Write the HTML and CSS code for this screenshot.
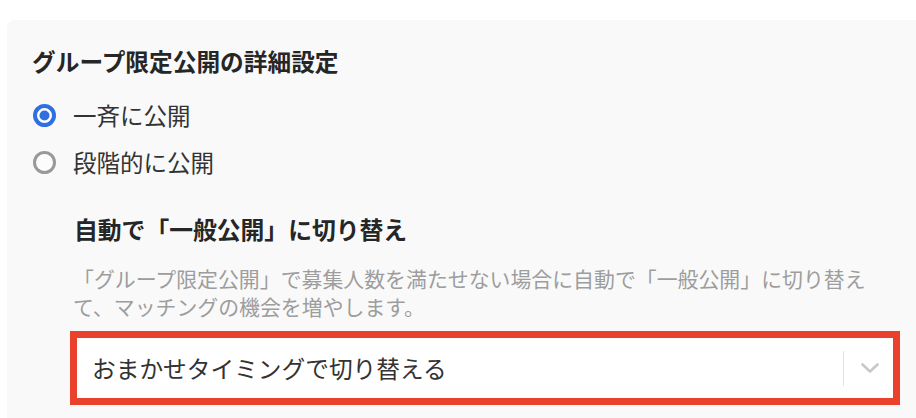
FILE: index.html
```html
<!DOCTYPE html>
<html lang="ja">
<head>
<meta charset="utf-8">
<link rel="stylesheet" href="styles.css">
</head>
<body>
<section class="card">
  <h2 class="title">グループ限定公開の詳細設定</h2>
  <div class="radios">
    <label class="radio-row">
      <svg class="radio" width="23" height="23" viewBox="0 0 23 23"><circle cx="11.5" cy="11.5" r="9.5" fill="#ffffff" stroke="#2f6fdf" stroke-width="4"/><circle cx="11.5" cy="11.5" r="5" fill="#2f6fdf"/></svg>
      <span class="radio-label">一斉に公開</span>
    </label>
    <label class="radio-row">
      <svg class="radio" width="23" height="23" viewBox="0 0 23 23"><circle cx="11.5" cy="11.5" r="10" fill="#fcfcfc" stroke="#999999" stroke-width="3"/></svg>
      <span class="radio-label">段階的に公開</span>
    </label>
  </div>
  <div class="sub">
    <h3 class="sub-title">自動で「一般公開」に切り替え</h3>
    <p class="desc">「グループ限定公開」で募集人数を満たせない場合に自動で「一般公開」に切り替え<br>て、マッチングの機会を増やします。</p>
    <div class="select">
      <span class="select-value">おまかせタイミングで切り替える</span>
      <span class="select-indicator">
        <svg width="18" height="10" viewBox="0 0 18 10"><path d="M1.5 1.5 L9 8.5 L16.5 1.5" fill="none" stroke="#c8c8c8" stroke-width="2.6" stroke-linecap="round" stroke-linejoin="round"/></svg>
      </span>
    </div>
  </div>
</section>
</body>
</html>
```
FILE: styles.css
```css
* { box-sizing: border-box; }
html, body { margin: 0; padding: 0; background: #ffffff; }
body {
  font-family: "Noto Sans CJK JP", "Noto Sans", sans-serif;
  color: #333333;
  width: 916px;
  height: 418px;
  overflow: hidden;
}
.card {
  margin: 20px 0 0 7px;
  background: #f9f9f9;
  border-radius: 8px 0 0 0;
  padding: 25px 0 20px 25px;
  min-height: 420px;
}
.title {
  margin: 0;
  font-size: 23.7px;
  line-height: 32px;
  font-weight: 700;
  color: #262626;
}
.radios {
  margin-top: 22px;
  display: flex;
  flex-direction: column;
  gap: 15px;
}
.radio-row {
  display: flex;
  align-items: center;
  height: 32px;
}
.radio {
  display: block;
  flex: none;
  width: 23px;
  height: 23px;
  margin-left: 1px;
  margin-right: 17px;
}
.radio-label {
  font-size: 23.5px;
  line-height: 32px;
  color: #333333;
}
.sub {
  margin-top: 35px;
  margin-left: 41px;
}
.sub-title {
  margin: 0;
  padding-left: 1px;
  font-size: 23.8px;
  line-height: 32px;
  font-weight: 700;
  color: #262626;
}
.desc {
  margin: 19px 0 0 0;
  width: 830px;
  font-size: 20.9px;
  line-height: 28px;
  color: #9d9d9d;
  white-space: nowrap;
}
.select {
  margin-top: 11px;
  margin-left: -3px;
  width: 830px;
  height: 74px;
  border: 7px solid #e9412b;
  background: #ffffff;
  display: flex;
  align-items: center;
}
.select-value {
  flex: 1;
  padding-left: 15px;
  font-size: 23.7px;
  line-height: 32px;
  color: #333333;
}
.select-indicator {
  width: 50px;
  height: 35px;
  border-left: 1px solid #e3e3e3;
  display: flex;
  align-items: center;
  justify-content: center;
  padding-left: 2px;
}
.select-indicator svg { display: block; }
```
